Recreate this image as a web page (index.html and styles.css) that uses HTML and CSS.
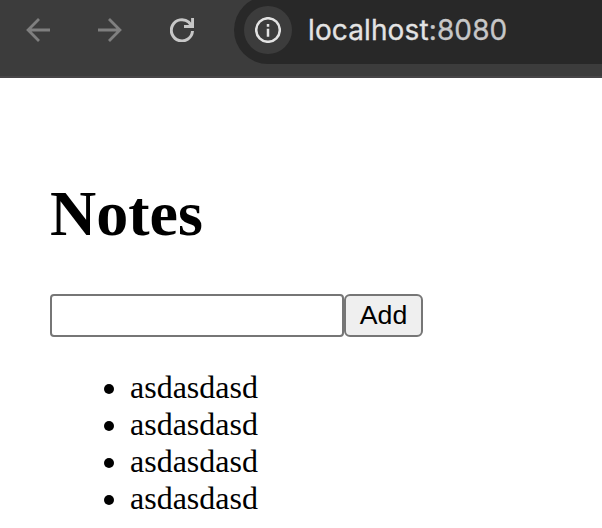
FILE: index.html
```html
<!DOCTYPE html>
<html lang="en">
<head>
<meta charset="utf-8">
<title>Notes</title>
<link rel="stylesheet" href="styles.css">
</head>
<body>
<header class="toolbar">
  <svg class="nav back" viewBox="0 0 24 24"><path d="M24 12H2.2M13 1.1L2.1 12 13 22.9"/></svg>
  <svg class="nav forward" viewBox="0 0 24 24"><path d="M0 12h21.8M11 1.1L21.9 12 11 22.9"/></svg>
  <svg class="nav reload" viewBox="0 0 24 24"><path d="M22.5 13A10.6 10.6 0 1 1 18.8 4.2L22.5 8.5M22.6 0v8.5H14"/></svg>
  <div class="omnibox">
    <span class="site-info">
      <svg class="info" viewBox="0 0 26 26"><circle cx="13" cy="13" r="11.8"/><path d="M13 11.7v8M13 7v2.7"/></svg>
    </span>
    <span class="url">localhost<span class="port">:8080</span></span>
  </div>
</header>
<main class="page">
  <h1 class="title">Notes</h1>
  <form class="add-note">
    <input class="note-input" type="text" aria-label="Note">
    <button class="add-button" type="button">Add</button>
  </form>
  <ul class="notes">
    <li>asdasdasd</li>
    <li>asdasdasd</li>
    <li>asdasdasd</li>
    <li>asdasdasd</li>
  </ul>
</main>
</body>
</html>
```
FILE: styles.css
```css
* { box-sizing: border-box; }
body {
  margin: 0;
  height: 528px;
  overflow: hidden;
  background: #fff;
  color: #000;
  font-family: "Liberation Serif", serif;
}
.toolbar {
  display: flex;
  align-items: flex-start;
  height: 78px;
  padding-left: 26px;
  background: #3c3c3c;
  border-bottom: 2px solid #474547;
  overflow: hidden;
}
.nav {
  flex: none;
  width: 24px;
  height: 24px;
  margin-top: 18px;
  margin-right: 48px;
  fill: none;
  stroke: #7f7f7f;
  stroke-width: 2.8;
}
.reload {
  margin-right: 40px;
  stroke: #c7c7c7;
  stroke-width: 3;
}
.omnibox {
  display: flex;
  flex: 1;
  align-items: center;
  height: 68px;
  margin-top: -4px;
  padding-left: 10px;
  background: #282828;
  border-radius: 34px 0 0 34px;
}
.site-info {
  display: flex;
  align-items: center;
  justify-content: center;
  width: 48px;
  height: 48px;
  margin-right: 16px;
  border-radius: 50%;
  background: #3c3c3c;
}
.info {
  width: 26px;
  height: 26px;
  fill: none;
  stroke: #e3e3e3;
  stroke-width: 2.5;
}
.url {
  color: #e3e3e3;
  font: 28px/34px Inter, sans-serif;
  letter-spacing: 0.12px;
  -webkit-text-stroke: 0.3px currentColor;
}
.port { color: #c7c7c7; }
.page { padding: 99px 50px 0; }
.title {
  margin: 0;
  font-size: 64px;
  line-height: 74px;
}
.add-note {
  display: flex;
  margin: 43px 0 32px;
}
.note-input {
  width: 294px;
  height: 43px;
  margin: 0;
  padding: 2px 4px;
  border: 2px solid #767676;
  border-radius: 4px;
  background: #fff;
  font: 26.67px "Liberation Sans", sans-serif;
}
.add-button {
  width: 79px;
  height: 43px;
  margin: 0;
  padding: 0 0 1px;
  border: 2px solid #767676;
  border-radius: 6px;
  background: #efefef;
  color: #000;
  font: 26.67px/37px "Liberation Sans", sans-serif;
}
.notes {
  margin: 0;
  padding: 0 0 0 80px;
  list-style: none;
  font-size: 32px;
  line-height: 37px;
}
.notes li {
  display: flex;
  align-items: center;
  height: 37px;
}
.notes li::before {
  content: "";
  width: 10px;
  height: 10px;
  margin: 3px 16px 0 -26px;
  border-radius: 50%;
  background: #000;
}
```
